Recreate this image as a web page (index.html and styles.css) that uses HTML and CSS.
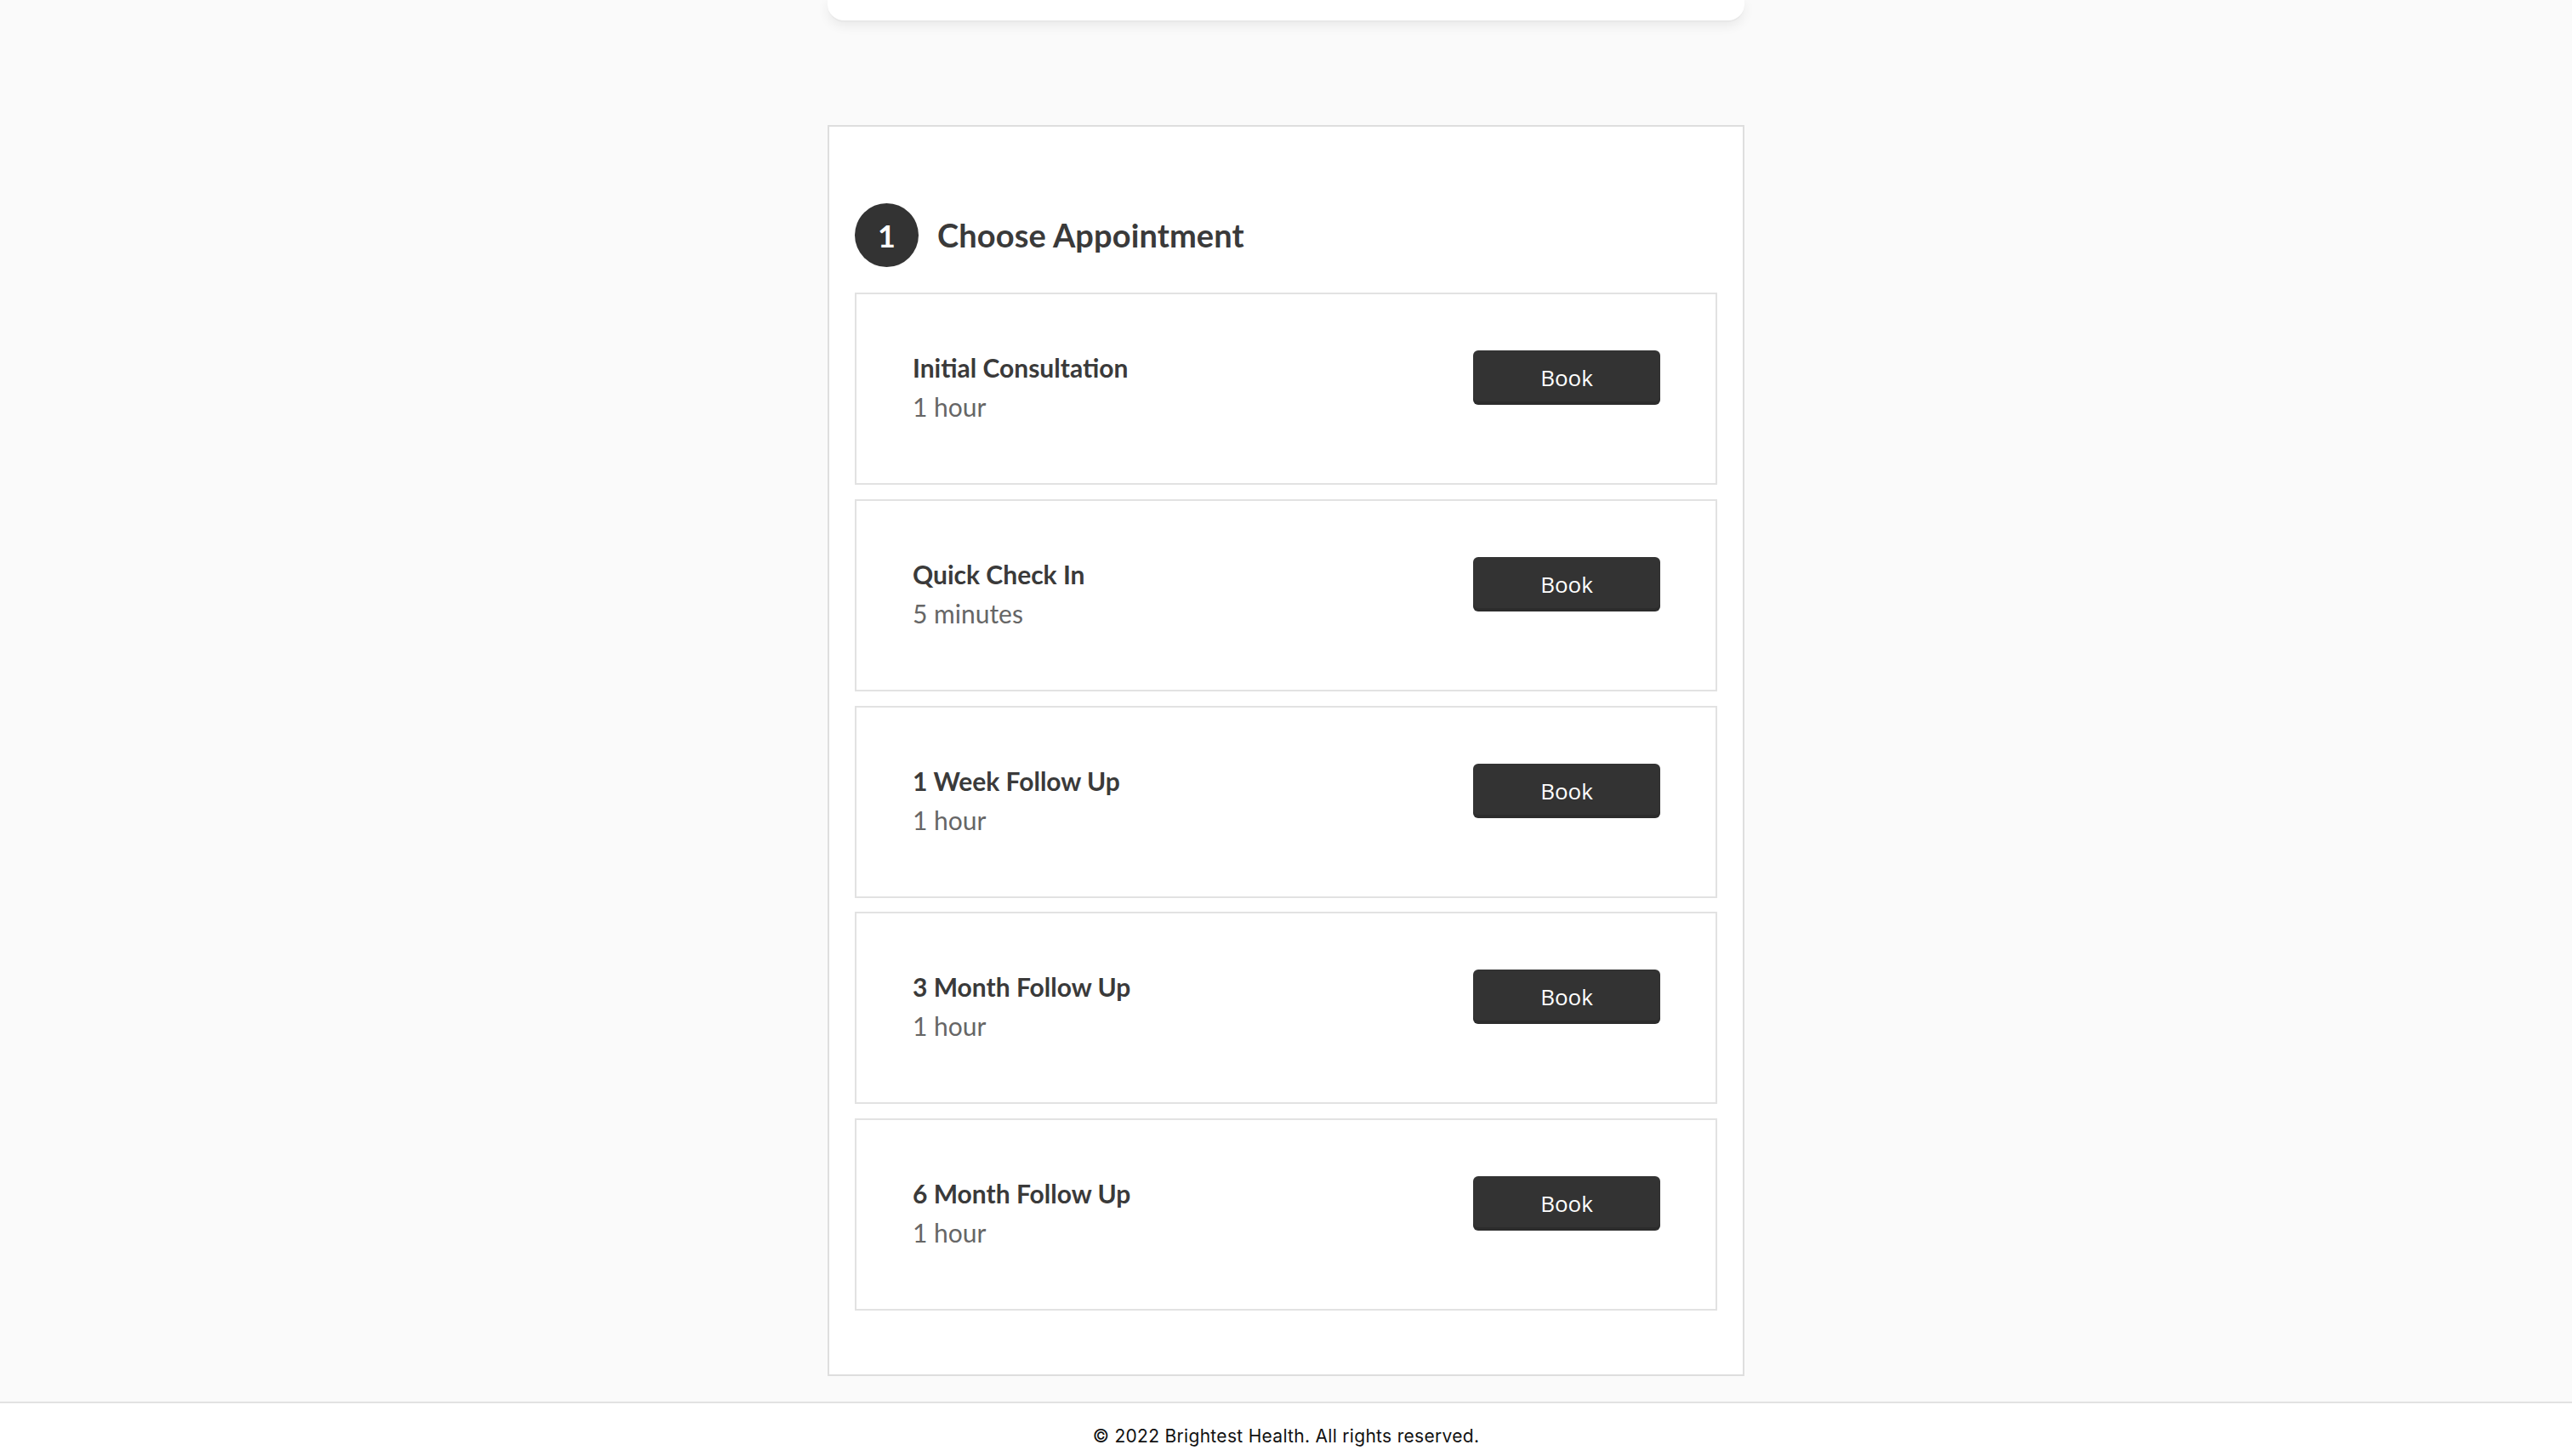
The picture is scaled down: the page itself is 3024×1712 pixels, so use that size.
FILE: index.html
```html
<!DOCTYPE html>
<html lang="en">
<head>
<meta charset="utf-8">
<title>Choose Appointment</title>
<link rel="stylesheet" href="styles.css">
</head>
<body>
<div class="page">
  <div class="top-card"></div>
  <section class="booking-card">
    <header class="step-header">
      <div class="step-num">1</div>
      <h2 class="step-title">Choose Appointment</h2>
    </header>
    <div class="appt-list">
      <div class="appt">
        <div class="appt-info">
          <div class="appt-name">Initial Consultation</div>
          <div class="appt-dur">1 hour</div>
        </div>
        <button class="book-btn">Book</button>
      </div>
      <div class="appt">
        <div class="appt-info">
          <div class="appt-name">Quick Check In</div>
          <div class="appt-dur">5 minutes</div>
        </div>
        <button class="book-btn">Book</button>
      </div>
      <div class="appt">
        <div class="appt-info">
          <div class="appt-name">1 Week Follow Up</div>
          <div class="appt-dur">1 hour</div>
        </div>
        <button class="book-btn">Book</button>
      </div>
      <div class="appt">
        <div class="appt-info">
          <div class="appt-name">3 Month Follow Up</div>
          <div class="appt-dur">1 hour</div>
        </div>
        <button class="book-btn">Book</button>
      </div>
      <div class="appt">
        <div class="appt-info">
          <div class="appt-name">6 Month Follow Up</div>
          <div class="appt-dur">1 hour</div>
        </div>
        <button class="book-btn">Book</button>
      </div>
    </div>
  </section>
</div>
<footer class="footer">© 2022 Brightest Health. All rights reserved.</footer>
</body>
</html>
```
FILE: styles.css
```css
* { box-sizing: border-box; }
html, body { margin: 0; padding: 0; }
body {
  background: #fafafa;
  font-family: Lato, "Liberation Sans", sans-serif;
  color: #3a3a3a;
}
.page {
  display: flex;
  flex-direction: column;
  align-items: center;
}
.top-card {
  width: 1078px;
  height: 26px;
  background: #fff;
  border-radius: 0 0 20px 20px;
  border-bottom: 2px solid #e8e8e8;
  box-shadow: 0 4px 14px rgba(0, 0, 0, 0.07);
}
.booking-card {
  width: 1078px;
  margin-top: 121px;
  background: #fff;
  border: 2px solid #dedede;
  padding: 30px 30px 75px;
}
.step-header {
  display: flex;
  align-items: center;
  gap: 22px;
  margin: 60px 0 30px;
  height: 75px;
}
.step-num {
  width: 75px;
  height: 75px;
  border-radius: 50%;
  background: #333;
  color: #fff;
  display: flex;
  align-items: center;
  justify-content: center;
  font-size: 36px;
  font-weight: 700;
}
.step-title {
  margin: 0 0 2px;
  font-size: 38px;
  font-weight: 700;
  letter-spacing: 0.1px;
  color: #3a3a3a;
}
.appt-list {
  display: flex;
  flex-direction: column;
  gap: 16.75px;
}
.appt {
  height: 226px;
  border: 2px solid #e2e2e2;
  padding: 63px 65px 0 66px;
  display: flex;
  justify-content: space-between;
  align-items: flex-start;
}
.appt-name {
  font-size: 30px;
  font-weight: 700;
  line-height: 46px;
  color: #3a3a3a;
}
.appt-dur {
  font-size: 30px;
  line-height: 46px;
  color: #666;
}
.book-btn {
  margin-top: 3px;
  width: 220px;
  height: 64px;
  border: none;
  border-radius: 6px;
  background: #333;
  color: #fff;
  font-family: "Open Sans", sans-serif;
  font-size: 26px;
  font-weight: 500;
  box-shadow: inset 0 -4px 0 rgba(0, 0, 0, 0.12);
  cursor: pointer;
}
.footer {
  margin-top: 30px;
  background: #fff;
  border-top: 2px solid #e2e2e2;
  padding: 27px 0 20px;
  text-align: center;
  font-family: Inter, "Liberation Sans", sans-serif;
  font-size: 21px;
  letter-spacing: 0.3px;
  line-height: 24px;
  color: #111;
}
```
